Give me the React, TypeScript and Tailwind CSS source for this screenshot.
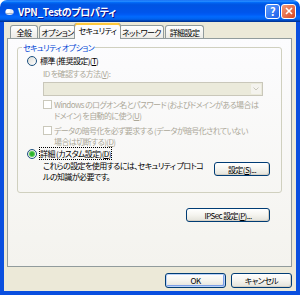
import React from 'react';

const FONT = "font-['Noto_Sans_CJK_JP','Noto_Sans',sans-serif]";

function U({ c }: { c: string }) {
  return <span className="underline underline-offset-1">{c}</span>;
}

function XpButton({ children, className = '', def = false }: { children: React.ReactNode; className?: string; def?: boolean }) {
  return (
    <div
      className={`flex items-center justify-center rounded-[3px] border border-[#003C74] bg-linear-to-b from-white via-[#F5F4EF] to-[#E3E2DA] text-black ${
        def ? 'shadow-[inset_0_0_0_1px_#B9D1F8,inset_-1px_-1px_0_1px_#7C9FE6]' : 'shadow-[inset_-1px_-1px_0_0_#D6D0C5]'
      } ${className}`}
    >
      {children}
    </div>
  );
}

function Radio({ checked = false }: { checked?: boolean }) {
  return (
    <span className="flex h-[10px] w-[10px] shrink-0 items-center justify-center rounded-full border border-[#1C5180] bg-linear-to-br from-[#DCDCD7] to-white">
      {checked && <span className="h-[4px] w-[4px] rounded-full bg-[#2BB32B] shadow-[0_0_0_1px_#5FCB5F]" />}
    </span>
  );
}

function DisabledCheck() {
  return <span className="mt-[1px] h-[9px] w-[9px] shrink-0 border border-[#CAC8BB] bg-white" />;
}

function Tab({ label, w, selected = false }: { label: string; w: string; selected?: boolean }) {
  if (selected) {
    return (
      <div
        className={`relative z-10 -mx-[2px] -mb-[1px] flex h-[16px] ${w} items-start justify-center rounded-t-[3px] border-x border-[#919B9C] bg-[#FCFCFE] pt-[2px] shadow-[inset_0_2px_0_0_#FFC83C,inset_0_1px_0_0_#E68B2C]`}
      >
        {label}
      </div>
    );
  }
  return (
    <div
      className={`flex h-[13px] ${w} items-center justify-center rounded-t-[3px] border border-b-0 border-[#919B9C] bg-linear-to-b from-white to-[#ECEBE6]`}
    >
      {label}
    </div>
  );
}

export default function App() {
  return (
    <div
      className={`flex h-[295px] w-[300px] flex-col whitespace-nowrap text-[8px] leading-[11px] tracking-[-0.6px] text-black [font-feature-settings:'palt'] ${FONT}`}
    >
      {/* title bar */}
      <div className="flex h-[22px] shrink-0 items-center rounded-t-[7px] bg-[linear-gradient(180deg,#0058EE_0%,#3593FF_4%,#288EFF_6%,#127DFF_8%,#036FFC_10%,#0262EE_14%,#0057E5_20%,#0054E3_24%,#0055EB_56%,#005BF5_66%,#026AFE_76%,#0062EF_86%,#0052D6_92%,#0040AB_94%,#003092_100%)] pl-[5px] pr-[4px]">
        <svg width="9" height="9" viewBox="0 0 9 9" className="shrink-0">
          <ellipse cx="4.5" cy="5" rx="4.2" ry="3" fill="#E8ECF4" />
          <ellipse cx="3" cy="4" rx="2.2" ry="2" fill="#FFFFFF" />
          <path d="M1 6.5h7" stroke="#9AA6BE" strokeWidth="0.8" />
        </svg>
        <span className="ml-[4px] text-[10px] font-bold tracking-[-0.3px] text-white [text-shadow:1px_1px_0_#0F1089]">VPN_Testのプロパティ</span>
        <div className="ml-auto flex gap-[1px]">
          <div className="flex h-[15px] w-[15px] items-center justify-center rounded-[3px] border border-white bg-linear-to-br from-[#5C9DFF] to-[#1C5CE8] text-[11px] font-bold leading-none text-white">?</div>
          <div className="flex h-[15px] w-[15px] items-center justify-center rounded-[3px] border border-white bg-linear-to-br from-[#F29A7A] to-[#D6421C]">
            <svg width="8" height="8" viewBox="0 0 8 8">
              <path d="M1 1L7 7M7 1L1 7" stroke="white" strokeWidth="1.6" />
            </svg>
          </div>
        </div>
      </div>

      {/* body */}
      <div className="flex flex-1 flex-col border-x-4 border-b-4 border-[#0A4FDF] bg-[#ECE9D8]">
        {/* tabs */}
        <div className="flex h-[16px] items-end pl-[6px]">
          <Tab label="全般" w="w-[28px]" />
          <div className="w-[1px]" />
          <Tab label="オプション" w="w-[37px]" />
          <Tab label="セキュリティ" w="w-[47px]" selected />
          <Tab label="ネットワーク" w="w-[45px]" />
          <div className="w-[1px]" />
          <Tab label="詳細設定" w="w-[39px]" />
        </div>

        {/* panel */}
        <div className="ml-[3px] mr-[4px] flex h-[229px] flex-col border border-[#919B9C] bg-linear-to-b from-[#FCFCFE] to-[#F4F3EE]">
          <fieldset className="mx-[9px] mt-[3px] h-[151px] rounded-[3px] border border-[#D0D0BF] pl-[9px] pr-[10px]">
            <legend className="ml-[-5px] px-[1px] text-[#0046D5]">セキュリティ オプション</legend>
            <div className="mt-[2px] flex h-[11px] items-center gap-[3px]">
              <Radio />
              <span>
                標準 (推奨設定)(<U c="T" />)
              </span>
            </div>
            <div className="ml-[16px] text-[#ACA899]">
              <div className="mt-[2px] h-[11px]">
                ID を確認する方法(<U c="V" />):
              </div>
              <div className="mr-[8px] mt-[3px] flex h-[14px] items-stretch border border-[#C9C7BA] bg-[#EBEADB]">
                <div className="flex-1" />
                <div className="m-[1px] flex w-[10px] items-center justify-center rounded-[1px] bg-[#F4F3EE]">
                  <svg width="6" height="4" viewBox="0 0 6 4">
                    <path d="M0.5 0.5L3 3L5.5 0.5" stroke="#C9C7BA" strokeWidth="1" fill="none" />
                  </svg>
                </div>
              </div>
              <div className="mt-[3px] flex gap-[1px]">
                <DisabledCheck />
                <div className="pl-[1px]">
                  <div>Windows のログオン名とパスワード (およびドメインがある場合は</div>
                  <div>
                    ドメイン) を自動的に使う(<U c="U" />)
                  </div>
                </div>
              </div>
              <div className="mt-[4px] flex gap-[1px]">
                <DisabledCheck />
                <div className="pl-[1px]">
                  <div>データの暗号化を必ず要求する (データが暗号化されていない</div>
                  <div>
                    場合は切断する)(<U c="D" />)
                  </div>
                </div>
              </div>
            </div>
            <div className="mt-[1px] flex h-[11px] items-center gap-[3px]">
              <Radio checked />
              <span className="outline outline-1 outline-dotted outline-black">
                詳細 (カスタム設定)(<U c="D" />)
              </span>
            </div>
            <div className="mt-[1px] flex items-start justify-between">
              <div className="ml-[16px]">
                <div>これらの設定を使用するには、セキュリティ プロトコ</div>
                <div>ルの知識が必要です。</div>
              </div>
              <XpButton className="mr-[1px] mt-[2px] h-[14px] w-[56px]">
                設定(<U c="S" />)...
              </XpButton>
            </div>
          </fieldset>
          <div className="mr-[21px] mt-[15px] flex justify-end">
            <XpButton className="h-[14px] w-[84px]">
              IPSec 設定(<U c="P" />)...
            </XpButton>
          </div>
        </div>

        {/* bottom buttons */}
        <div className="mr-[4px] mt-[6px] flex justify-end gap-[5px]">
          <XpButton def className="h-[15px] w-[61px]">
            OK
          </XpButton>
          <XpButton className="h-[15px] w-[61px]">キャンセル</XpButton>
        </div>
      </div>
    </div>
  );
}
